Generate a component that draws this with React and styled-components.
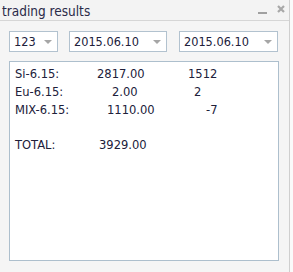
import React from "react";
import styled, { createGlobalStyle } from "styled-components";

const Global = createGlobalStyle`
  html, body { margin: 0; padding: 0; background: #fafafa; }
  body { width: 293px; height: 272px; overflow: hidden; }
`;

const Window = styled.div`
  width: 289px;
  height: 272px;
  background: #f5f5f5;
  border-right: 1px solid #cfcfcf;
  display: flex;
  flex-direction: column;
  font-family: "DejaVu Sans Condensed", "DejaVu Sans", sans-serif;
  color: #20203a;
`;

const TitleBar = styled.div`
  height: 20px;
  border-bottom: 1px solid #d6d6d6;
  background: #f3f3f3;
  display: flex;
  align-items: center;
  padding-left: 2px;
  padding-right: 4px;
`;

const Title = styled.div`
  flex: 1;
  font-size: 13.5px;
  color: #2a2a48;
  line-height: 20px;
  padding-top: 1px;
`;

const TitleButtons = styled.div`
  display: flex;
  align-items: center;
  gap: 10px;
  height: 20px;
`;

const Minimize = styled.div`
  width: 9px;
  height: 2px;
  background: #a0a0a0;
  margin-top: 5px;
`;

const Close = styled.svg`
  width: 8px;
  height: 8px;
  margin-bottom: 2px;
`;

const Body = styled.div`
  flex: 1;
  padding: 10px 10px 11px 9px;
  display: flex;
  flex-direction: column;
  gap: 9px;
`;

const Controls = styled.div`
  display: flex;
  gap: 11px;
`;

const Select = styled.div`
  box-sizing: border-box;
  width: ${(p) => p.$w}px;
  margin-left: ${(p) => p.$ml || 0}px;
  height: 21px;
  background: #fff;
  border: 1px solid #b2c2cf;
  display: flex;
  align-items: center;
  padding: 0 5px 0 4px;
  font-size: 12.6px;
  color: #20203a;
`;

const SelectText = styled.span`
  flex: 1;
`;

const Caret = styled.span`
  width: 0;
  height: 0;
  border-left: 4px solid transparent;
  border-right: 4px solid transparent;
  border-top: 4px solid #a6a6a6;
`;

const Output = styled.div`
  box-sizing: border-box;
  width: 270px;
  flex: 1;
  background: #fff;
  border: 1px solid #adbfcd;
  padding: 3px 4px 3px 5px;
  font-size: 12.8px;
  line-height: 17.8px;
`;

const Row = styled.div`
  display: flex;
  height: 17.8px;
  white-space: pre;
`;

const Cell = styled.span`
  flex: none;
  width: ${(p) => (p.$w ? `${p.$w}px` : "auto")};
`;

const rows = [
  [["Si-6.15:", 82], ["2817.00", 91], ["1512"]],
  [["Eu-6.15:", 97], ["2.00", 82], ["2"]],
  [["MIX-6.15:", 92], ["1110.00", 99], ["-7"]],
  [],
  [["TOTAL:", 84], ["3929.00"]],
];

function Dropdown({ value, w, ml }) {
  return (
    <Select $w={w} $ml={ml}>
      <SelectText>{value}</SelectText>
      <Caret />
    </Select>
  );
}

export default function App() {
  return (
    <>
      <Global />
      <Window>
        <TitleBar>
          <Title>trading results</Title>
          <TitleButtons>
            <Minimize />
            <Close viewBox="0 0 8 8">
              <path d="M1 1 L7 7 M7 1 L1 7" stroke="#a8a8a8" strokeWidth="2.2" />
            </Close>
          </TitleButtons>
        </TitleBar>
        <Body>
          <Controls>
            <Dropdown value="123" w={49} />
            <Dropdown value="2015.06.10" w={98} />
            <Dropdown value="2015.06.10" w={99} ml={1} />
          </Controls>
          <Output>
            {rows.map((r, i) => (
              <Row key={i}>
                {r.map(([t, w], j) => (
                  <Cell key={j} $w={w}>
                    {t}
                  </Cell>
                ))}
              </Row>
            ))}
          </Output>
        </Body>
      </Window>
    </>
  );
}
